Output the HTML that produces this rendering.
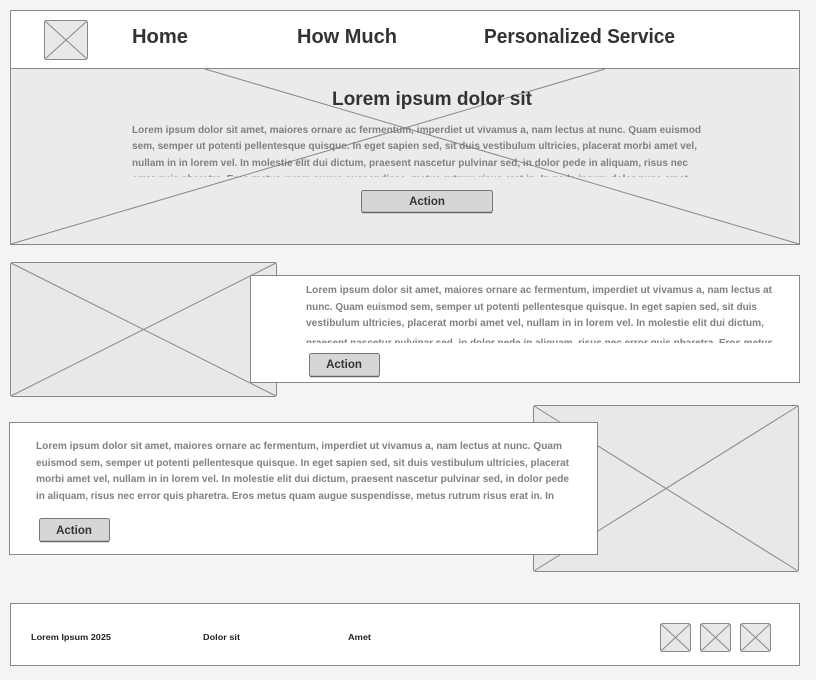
<!DOCTYPE html>
<html><head><meta charset="utf-8"><style>
html,body{margin:0;padding:0;background:#f4f4f4;}
svg{display:block;font-family:"Liberation Sans",sans-serif;}
.t{font-size:10.5px;font-weight:bold;fill:#808080;}
.b{font-size:11.5px;font-weight:bold;fill:#333;}
.f{font-size:8.5px;font-weight:bold;fill:#222;}
</style></head><body>
<svg width="816" height="680" viewBox="0 0 816 680" xmlns="http://www.w3.org/2000/svg">
<defs>
<clipPath id="c1"><rect x="100" y="120" width="650" height="57"/></clipPath>
<clipPath id="c2"><rect x="280" y="280" width="510" height="63"/></clipPath>
</defs>
<rect width="816" height="680" fill="#f4f4f4"/>
<!-- header -->
<rect x="10.5" y="10.5" width="789" height="58" fill="#fff" stroke="#888"/>
<rect x="44.5" y="20.5" width="43" height="39" rx="2" fill="#e8e8e8" stroke="#888"/>
<path d="M45 21L87 59M87 21L45 59" stroke="#888"/>
<text x="132" y="43" font-size="20" font-weight="bold" fill="#333" textLength="56" lengthAdjust="spacingAndGlyphs">Home</text>
<text x="297" y="43" font-size="20" font-weight="bold" fill="#333" textLength="100" lengthAdjust="spacingAndGlyphs">How Much</text>
<text x="484" y="43" font-size="20" font-weight="bold" fill="#333" textLength="191" lengthAdjust="spacingAndGlyphs">Personalized Service</text>
<!-- hero -->
<rect x="10.5" y="68.5" width="789" height="176" fill="#ebebeb" stroke="#888"/>
<path d="M205 69L799 244M605 69L11 244" stroke="#888"/>
<text x="332" y="105" font-size="19" font-weight="bold" fill="#333" textLength="200" lengthAdjust="spacingAndGlyphs">Lorem ipsum dolor sit</text>
<g clip-path="url(#c1)">
<text class="t" x="132" y="133" textLength="569" lengthAdjust="spacingAndGlyphs">Lorem ipsum dolor sit amet, maiores ornare ac fermentum, imperdiet ut vivamus a, nam lectus at nunc. Quam euismod</text>
<text class="t" x="132" y="149" textLength="565" lengthAdjust="spacingAndGlyphs">sem, semper ut potenti pellentesque quisque. In eget sapien sed, sit duis vestibulum ultricies, placerat morbi amet vel,</text>
<text class="t" x="132" y="166" textLength="556" lengthAdjust="spacingAndGlyphs">nullam in in lorem vel. In molestie elit dui dictum, praesent nascetur pulvinar sed, in dolor pede in aliquam, risus nec</text>
<text class="t" x="132" y="182" textLength="556" lengthAdjust="spacingAndGlyphs">error quis pharetra. Eros metus quam augue suspendisse, metus rutrum risus erat in. In pede ipsum dolor nunc amet</text>
</g>
<rect x="361.5" y="190.5" width="131" height="22" rx="2" fill="#d6d6d6" stroke="#777"/>
<path d="M362 212.5H492" stroke="#666" stroke-width="1.5"/>
<text class="b" x="427" y="205" text-anchor="middle">Action</text>
<!-- row 2 -->
<rect x="10.5" y="262.5" width="266" height="134" rx="2" fill="#e8e8e8" stroke="#888"/>
<path d="M11 263L276 396M276 263L11 396" stroke="#888"/>
<rect x="250.5" y="275.5" width="549" height="107" fill="#fff" stroke="#888"/>
<g clip-path="url(#c2)">
<text class="t" x="306" y="293" textLength="466" lengthAdjust="spacingAndGlyphs">Lorem ipsum dolor sit amet, maiores ornare ac fermentum, imperdiet ut vivamus a, nam lectus at</text>
<text class="t" x="306" y="310" textLength="451" lengthAdjust="spacingAndGlyphs">nunc. Quam euismod sem, semper ut potenti pellentesque quisque. In eget sapien sed, sit duis</text>
<text class="t" x="306" y="326" textLength="458" lengthAdjust="spacingAndGlyphs">vestibulum ultricies, placerat morbi amet vel, nullam in in lorem vel. In molestie elit dui dictum,</text>
<text class="t" x="306" y="346" textLength="467" lengthAdjust="spacingAndGlyphs">praesent nascetur pulvinar sed, in dolor pede in aliquam, risus nec error quis pharetra. Eros metus</text>
</g>
<rect x="309.5" y="353.5" width="70" height="23" rx="2" fill="#d6d6d6" stroke="#777"/>
<path d="M310 376.5H379" stroke="#666" stroke-width="1.5"/>
<text class="b" x="344" y="368" text-anchor="middle">Action</text>
<!-- row 3 -->
<rect x="533.5" y="405.5" width="265" height="166" rx="2" fill="#e8e8e8" stroke="#888"/>
<path d="M534 406L798 571M798 406L534 571" stroke="#888"/>
<rect x="9.5" y="422.5" width="588" height="132" fill="#fff" stroke="#888"/>
<text class="t" x="36" y="449" textLength="526" lengthAdjust="spacingAndGlyphs">Lorem ipsum dolor sit amet, maiores ornare ac fermentum, imperdiet ut vivamus a, nam lectus at nunc. Quam</text>
<text class="t" x="36" y="466" textLength="533" lengthAdjust="spacingAndGlyphs">euismod sem, semper ut potenti pellentesque quisque. In eget sapien sed, sit duis vestibulum ultricies, placerat</text>
<text class="t" x="36" y="482" textLength="533" lengthAdjust="spacingAndGlyphs">morbi amet vel, nullam in in lorem vel. In molestie elit dui dictum, praesent nascetur pulvinar sed, in dolor pede</text>
<text class="t" x="36" y="499" textLength="518" lengthAdjust="spacingAndGlyphs">in aliquam, risus nec error quis pharetra. Eros metus quam augue suspendisse, metus rutrum risus erat in.  In</text>
<rect x="39.5" y="518.5" width="70" height="23" rx="2" fill="#d6d6d6" stroke="#777"/>
<path d="M40 541.5H109" stroke="#666" stroke-width="1.5"/>
<text class="b" x="74" y="534" text-anchor="middle">Action</text>
<!-- footer -->
<rect x="10.5" y="603.5" width="789" height="62" fill="#fff" stroke="#888"/>
<text class="f" x="31" y="640" textLength="80" lengthAdjust="spacingAndGlyphs">Lorem Ipsum 2025</text>
<text class="f" x="203" y="640" textLength="37" lengthAdjust="spacingAndGlyphs">Dolor sit</text>
<text class="f" x="348" y="640" textLength="23" lengthAdjust="spacingAndGlyphs">Amet</text>
<rect x="660.5" y="623.5" width="30" height="28" rx="2" fill="#e8e8e8" stroke="#888"/>
<path d="M661 624L690 651M690 624L661 651" stroke="#888"/>
<rect x="700.5" y="623.5" width="30" height="28" rx="2" fill="#e8e8e8" stroke="#888"/>
<path d="M701 624L730 651M730 624L701 651" stroke="#888"/>
<rect x="740.5" y="623.5" width="30" height="28" rx="2" fill="#e8e8e8" stroke="#888"/>
<path d="M741 624L770 651M770 624L741 651" stroke="#888"/>
</svg>
</body></html>
